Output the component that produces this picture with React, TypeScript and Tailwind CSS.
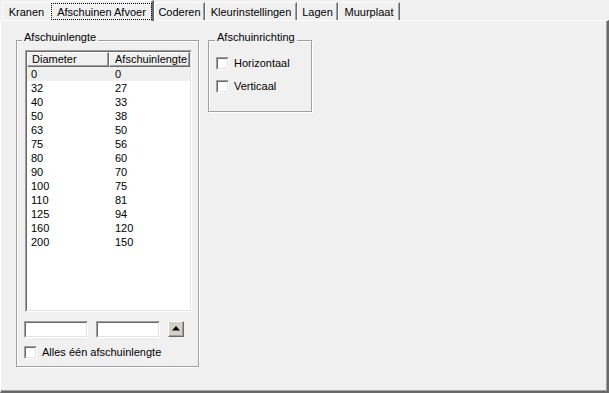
import React from "react";

const rows: [string, string][] = [
  ["0", "0"],
  ["32", "27"],
  ["40", "33"],
  ["50", "38"],
  ["63", "50"],
  ["75", "56"],
  ["80", "60"],
  ["90", "70"],
  ["100", "75"],
  ["110", "81"],
  ["125", "94"],
  ["160", "120"],
  ["200", "150"],
];

function Tab({ label, w, last }: { label: string; w: string; last?: boolean }) {
  return (
    <div
      className={`${w} h-[18px] flex justify-center pt-[3px] border-t border-l border-t-white border-l-white ${
        last === false ? "" : "border-r border-r-[#696969] shadow-[inset_-1px_0_0_#a0a0a0]"
      }`}
    >
      <span className="whitespace-nowrap">{label}</span>
    </div>
  );
}

function Sunken({ className, children }: { className: string; children?: React.ReactNode }) {
  return (
    <div className={`${className} border border-t-[#a0a0a0] border-l-[#a0a0a0] border-r-white border-b-white flex`}>
      <div className="flex-1 border border-t-[#696969] border-l-[#696969] border-r-[#e3e3e3] border-b-[#e3e3e3] bg-white flex flex-col overflow-hidden">
        {children}
      </div>
    </div>
  );
}

function Check({ label }: { label: string }) {
  return (
    <div className="flex items-center gap-[5px] h-[13px]">
      <Sunken className="w-[13px] h-[13px] shrink-0" />
      <span className="whitespace-nowrap">{label}</span>
    </div>
  );
}

export default function App() {
  return (
    <div className="w-[609px] h-[393px] bg-[#f0f0f0] flex flex-col overflow-hidden font-['Liberation_Sans',Arial,sans-serif] text-[11px] leading-[13px] text-black">
      {/* tab strip */}
      <div className="h-[20px] flex items-end pl-[2px] relative z-10">
        <Tab label="Kranen" w="w-[48px]" last={false} />
        <div className="w-[104px] h-[21px] -mb-[1px] bg-[#f0f0f0] flex border-t border-l border-t-white border-l-white border-r-2 border-r-[#696969] shadow-[inset_-1px_0_0_#a0a0a0]">
          <div className="mt-[2px] w-full h-[17px] border border-dotted border-black flex justify-center pt-[2px]">
            <span className="whitespace-nowrap">Afschuinen Afvoer</span>
          </div>
        </div>
        <Tab label="Coderen" w="w-[51px]" />
        <Tab label="Kleurinstellingen" w="w-[92px]" />
        <Tab label="Lagen" w="w-[41px]" />
        <Tab label="Muurplaat" w="w-[62px]" />
      </div>

      {/* panel */}
      <div className="flex-1 flex items-start gap-[9px] pt-[19px] pl-[15px] border-t border-l border-t-white border-l-white border-r-2 border-b-2 border-r-[#696969] border-b-[#696969] shadow-[inset_-1px_-1px_0_#a0a0a0]">
        {/* group 1 */}
        <div className="relative w-[183px] h-[327px] border border-[#a0a0a0] shadow-[inset_1px_1px_0_#ffffff,1px_1px_0_#ffffff] flex flex-col pt-[9px] pl-[7px]">
          <span className="absolute left-[5px] -top-[10px] px-[2px] bg-[#f0f0f0] whitespace-nowrap">Afschuinlengte</span>

          <Sunken className="ml-[1px] w-[167px] h-[262px]">
            <div className="flex h-[15px] shrink-0 bg-[#f0f0f0]">
              <div className="w-[82px] pl-[4px] border-t border-l border-t-white border-l-white border-r border-b border-r-[#696969] border-b-[#696969] shadow-[inset_-1px_-1px_0_#a0a0a0]">
                Diameter
              </div>
              <div className="w-[81px] pl-[5px] border-t border-l border-t-white border-l-white border-r border-b border-r-[#696969] border-b-[#696969] shadow-[inset_-1px_-1px_0_#a0a0a0] whitespace-nowrap">
                Afschuinlengte
              </div>
            </div>
            {rows.map(([d, a], i) => (
              <div key={d} className={`flex items-center h-[14px] shrink-0 ${i === 0 ? "bg-[#efefef]" : ""}`}>
                <div className="w-[82px] pl-[4px]">{d}</div>
                <div className="pl-[6px]">{a}</div>
              </div>
            ))}
          </Sunken>

          <div className="flex items-start gap-[8px] mt-[9px]">
            <Sunken className="w-[64px] h-[17px]" />
            <Sunken className="w-[64px] h-[17px]" />
            <div className="w-[16px] h-[16px] border border-t-white border-l-white border-r-[#696969] border-b-[#696969] bg-[#d4d0c8] shadow-[inset_-1px_-1px_0_#a0a0a0] flex items-center justify-center">
              <svg width="8" height="5" viewBox="0 0 8 5" className="-mt-[1px]">
                <polygon points="4,0 8,4.5 0,4.5" fill="#000" />
              </svg>
            </div>
          </div>

          <div className="mt-[8px]">
            <Check label="Alles één afschuinlengte" />
          </div>
        </div>

        {/* group 2 */}
        <div className="relative w-[104px] h-[72px] border border-[#a0a0a0] shadow-[inset_1px_1px_0_#ffffff,1px_1px_0_#ffffff] flex flex-col gap-[10px] pt-[16px] pl-[7px]">
          <span className="absolute left-[6px] -top-[10px] px-[2px] bg-[#f0f0f0] whitespace-nowrap">Afschuinrichting</span>
          <Check label="Horizontaal" />
          <Check label="Verticaal" />
        </div>
      </div>
    </div>
  );
}
